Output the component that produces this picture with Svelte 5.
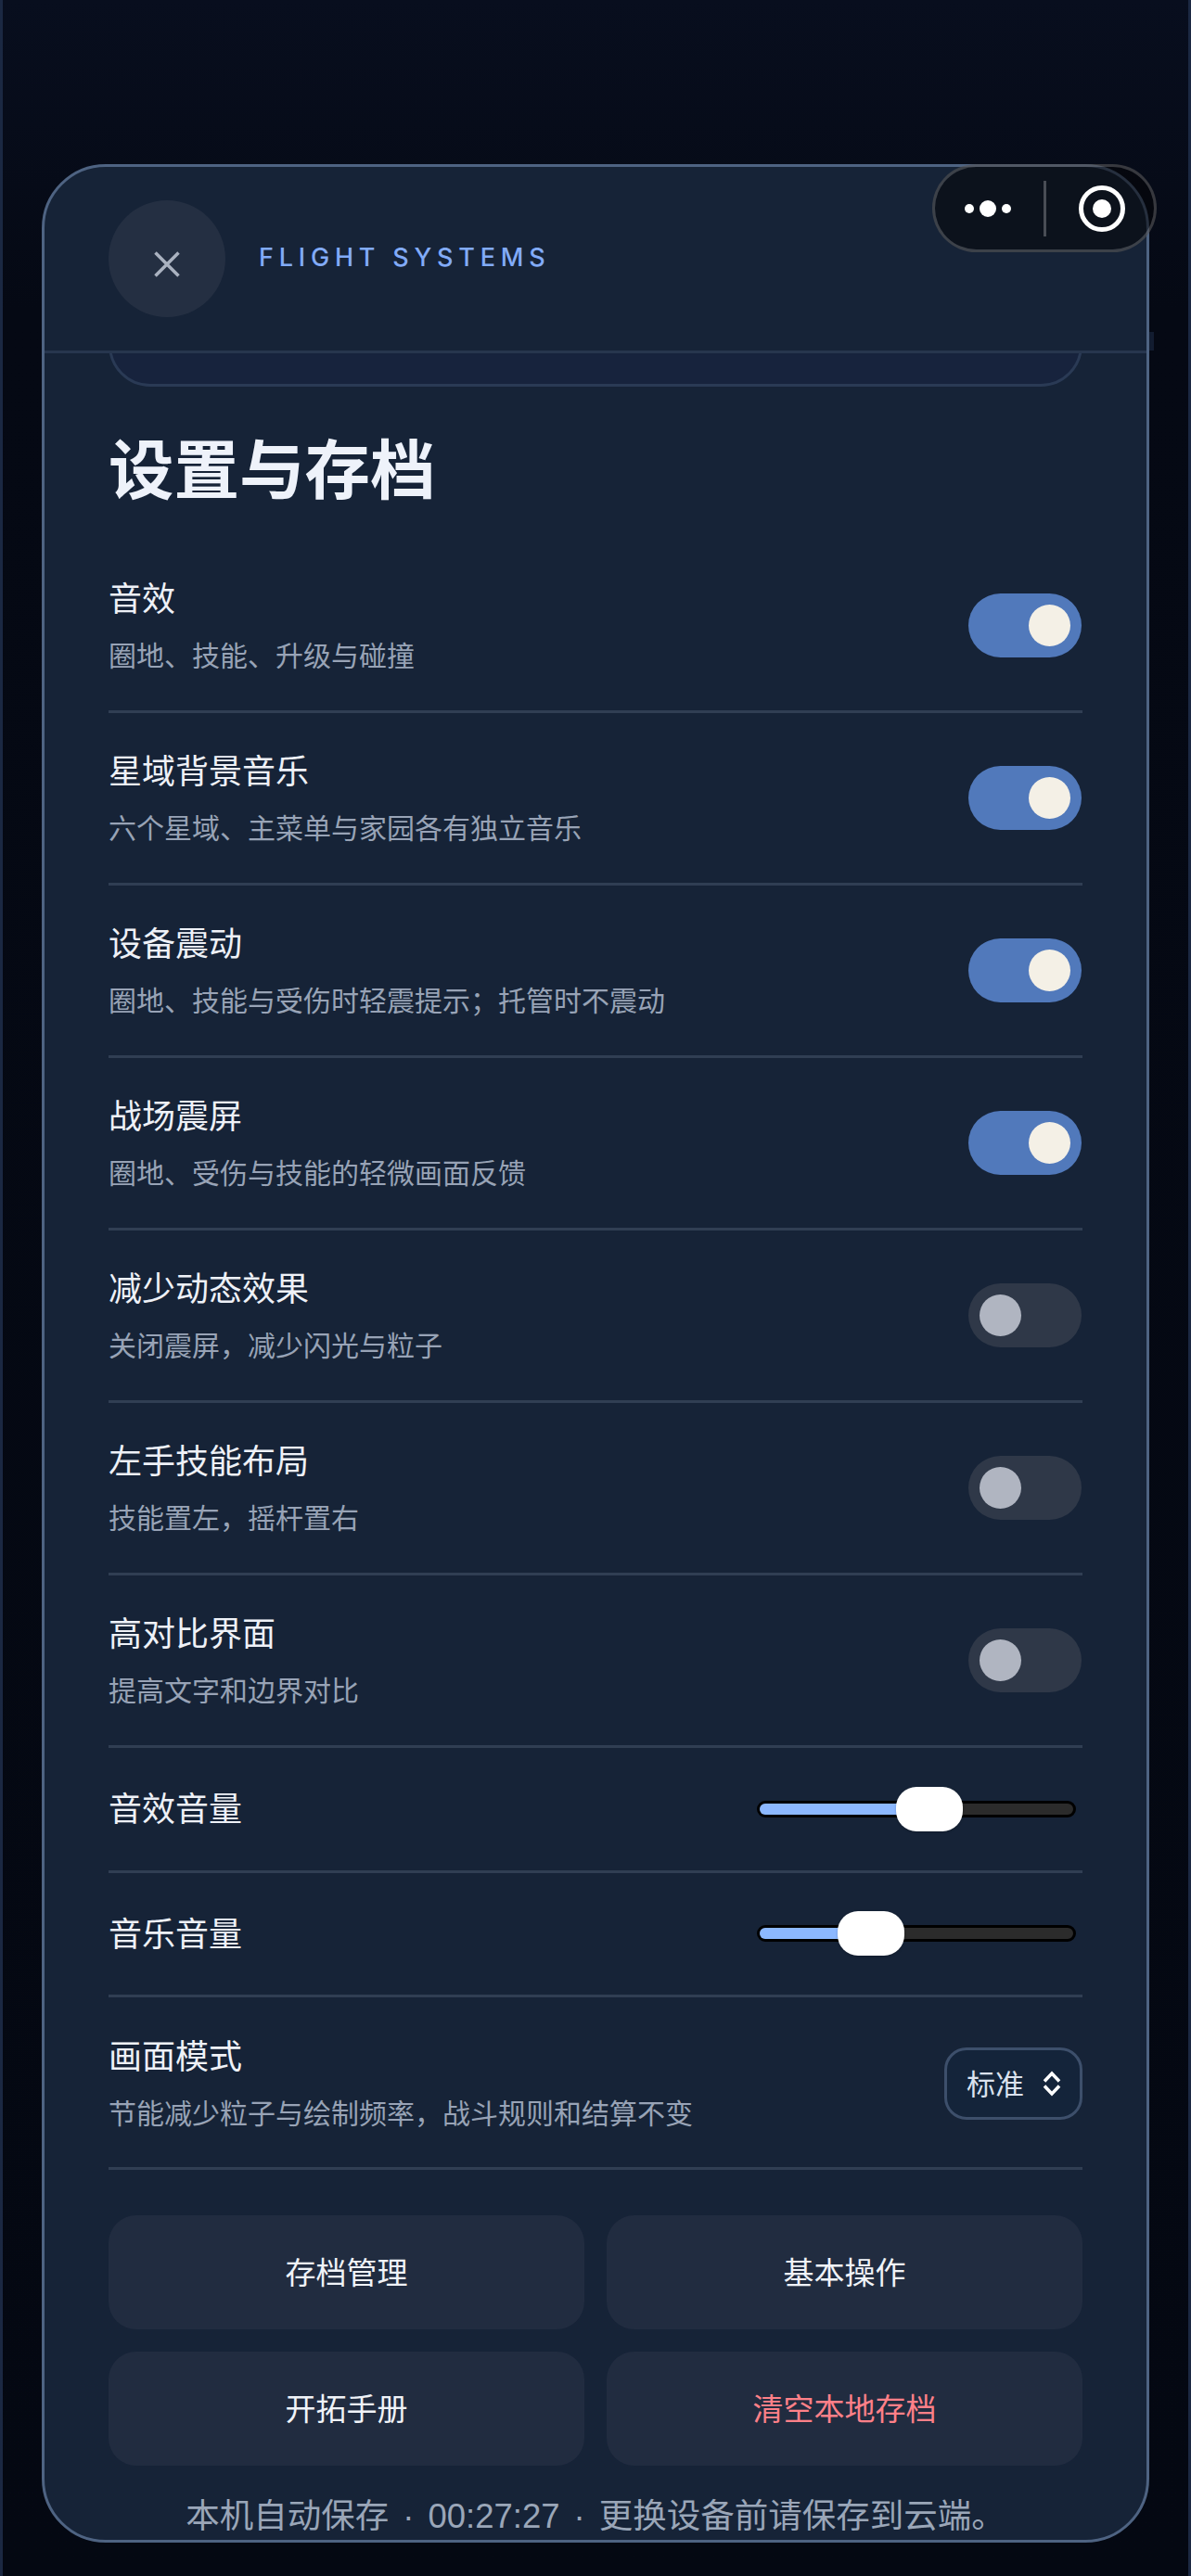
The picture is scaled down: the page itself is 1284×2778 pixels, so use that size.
<script>
  let toggles = $state([
    { label: '音效', sub: '圈地、技能、升级与碰撞', on: true },
    { label: '星域背景音乐', sub: '六个星域、主菜单与家园各有独立音乐', on: true },
    { label: '设备震动', sub: '圈地、技能与受伤时轻震提示；托管时不震动', on: true },
    { label: '战场震屏', sub: '圈地、受伤与技能的轻微画面反馈', on: true },
    { label: '减少动态效果', sub: '关闭震屏，减少闪光与粒子', on: false },
    { label: '左手技能布局', sub: '技能置左，摇杆置右', on: false },
    { label: '高对比界面', sub: '提高文字和边界对比', on: false }
  ]);

  const volumes = [
    { label: '音效音量', value: 55 },
    { label: '音乐音量', value: 32 }
  ];

  const actions = [
    { label: '存档管理' },
    { label: '基本操作' },
    { label: '开拓手册' },
    { label: '清空本地存档', danger: true }
  ];
</script>

<div class="screen">
  <div class="sheet">
    <header class="sheet-header">
      <button class="close" aria-label="关闭">
        <svg width="28" height="28" viewBox="0 0 28 28">
          <path d="M1.5 1.5 26.500 26.500M26.500 1.500 1.500 26.500" />
        </svg>
      </button>
      <span class="eyebrow">FLIGHT SYSTEMS</span>
    </header>

    <div class="sheet-body">
      <div class="peek"></div>
      <h1>设置与存档</h1>

      {#each toggles as item}
        <div class="row">
          <div class="text">
            <div class="label">{item.label}</div>
            <div class="sub">{item.sub}</div>
          </div>
          <button
            class="toggle {item.on ? 'on' : ''}"
            aria-label={item.label}
            onclick={() => (item.on = !item.on)}
          >
            <span class="knob"></span>
          </button>
        </div>
      {/each}

      {#each volumes as vol}
        <div class="row slider-row">
          <div class="label">{vol.label}</div>
          <div class="slider" style="--v: {vol.value}">
            <div class="fill"></div>
            <div class="thumb"></div>
          </div>
        </div>
      {/each}

      <div class="row mode-row">
        <div class="text">
          <div class="label">画面模式</div>
          <div class="sub">节能减少粒子与绘制频率，战斗规则和结算不变</div>
        </div>
        <div class="select">
          <span class="select-value">标准</span>
          <svg width="20" height="28" viewBox="0 0 20 28">
            <path d="M2 11.500 10 3 18 11.500M2 16.500 10 25 18 16.500" />
          </svg>
        </div>
      </div>

      <div class="actions">
        {#each actions as action}
          <button class="action {action.danger ? 'danger' : ''}">{action.label}</button>
        {/each}
      </div>

      <p class="footnote">本机自动保存<span class="sep">·</span>00:27:27<span class="sep">·</span>更换设备前请保存到云端。</p>
    </div>
  </div>

  <div class="edge-mark"></div>

  <div class="capsule">
    <div class="dots">
      <i class="dot"></i>
      <i class="dot big"></i>
      <i class="dot"></i>
    </div>
    <div class="capsule-line"></div>
    <div class="target"><i></i></div>
  </div>
</div>

<style>
  :global(body) {
    margin: 0;
    background: #050914;
  }

  .screen {
    position: relative;
    box-sizing: border-box;
    width: 1284px;
    height: 2778px;
    padding: 177px 42px 0;
    overflow: hidden;
    border-left: 3px solid #1b2842;
    border-right: 3px solid #1b2842;
    background: linear-gradient(180deg, #080e1e 0%, #050914 12%, #040812 100%);
    font-family: "Liberation Sans", "Noto Sans CJK SC", sans-serif;
  }

  button {
    font-family: inherit;
    border: none;
    padding: 0;
    cursor: pointer;
  }

  .sheet {
    box-sizing: border-box;
    height: 2565px;
    display: flex;
    flex-direction: column;
    overflow: hidden;
    background: #162337;
    border: 3px solid #4e6382;
    border-radius: 69px;
  }

  .sheet-header {
    flex: none;
    box-sizing: border-box;
    height: 201px;
    display: flex;
    align-items: center;
    gap: 36px;
    padding: 0 69px;
    border-bottom: 3px solid #27364e;
  }

  .close {
    width: 126px;
    height: 126px;
    padding-top: 12px;
    border-radius: 50%;
    background: #242f42;
    display: flex;
    align-items: center;
    justify-content: center;
  }

  .close path {
    fill: none;
    stroke: #aab2c0;
    stroke-width: 3.500;
  }

  .eyebrow {
    margin-bottom: 3px;
    font-family: Inter, "Liberation Sans", sans-serif;
    font-size: 27px;
    font-weight: 500;
    letter-spacing: 5.800px;
    color: #82abf8;
  }

  .sheet-body {
    flex: 1;
    min-height: 0;
    overflow: hidden;
    padding: 0 69px;
  }

  .peek {
    box-sizing: border-box;
    height: 96px;
    margin-top: -60px;
    background: #17233d;
    border: 3px solid #2a3a55;
    border-radius: 45px;
  }

  h1 {
    margin: 47px 0 29px;
    font-size: 70.500px;
    line-height: 90px;
    font-weight: 700;
    color: #eef2fa;
  }

  .row {
    box-sizing: border-box;
    height: 186px;
    display: flex;
    align-items: center;
    justify-content: space-between;
    border-bottom: 3px solid #303e53;
  }

  .slider-row {
    height: 134.500px;
  }

  .slider-row .label {
    padding-top: 3px;
  }

  .mode-row .text {
    padding-top: 3px;
  }

  .label {
    padding-top: 1px;
    font-size: 36px;
    line-height: 50px;
    color: #eef1f7;
  }

  .sub {
    margin-top: 15px;
    font-size: 30px;
    line-height: 42px;
    color: #98a3b6;
  }

  .toggle {
    position: relative;
    flex: none;
    width: 122px;
    height: 69px;
    margin-right: 1px;
    border-radius: 35px;
    background: #2f3848;
  }

  .toggle.on {
    background: #5179bb;
  }

  .knob {
    position: absolute;
    top: 12px;
    left: 12px;
    width: 45px;
    height: 45px;
    border-radius: 50%;
    background: #b0b5c1;
  }

  .toggle.on .knob {
    left: 65px;
    background: #f4f0e6;
  }

  .slider {
    position: relative;
    box-sizing: border-box;
    width: 344px;
    height: 18px;
    margin-right: 7px;
    background: #2b2b2b;
    border: 3px solid #000;
    border-radius: 9px;
  }

  .fill {
    height: 100%;
    width: calc((100% - 66px) * var(--v) / 100 + 20px);
    background: #8cb8ff;
    border-radius: 6px 0 0 6px;
  }

  .thumb {
    position: absolute;
    top: -18px;
    left: calc((100% + 6px - 72px) * var(--v) / 100 - 3px);
    width: 72px;
    height: 48px;
    border-radius: 22px;
    background: #fff;
    box-shadow: 0 1px 3px rgba(0, 0, 0, 0.2);
  }

  .select {
    flex: none;
    box-sizing: border-box;
    width: 149px;
    height: 78px;
    margin-top: 3px;
    display: flex;
    align-items: center;
    gap: 20px;
    padding-left: 21px;
    background: #14243a;
    border: 3px solid #3d4f6b;
    border-radius: 24px;
    font-size: 31px;
    color: #dbe2ee;
  }

  .select-value {
    padding-bottom: 3px;
  }

  .select path {
    fill: none;
    stroke: #fff;
    stroke-width: 3.500;
  }

  .actions {
    margin-top: 49px;
    display: grid;
    grid-template-columns: 1fr 1fr;
    gap: 24px;
  }

  .action {
    height: 123px;
    padding-bottom: 3px;
    border-radius: 30px;
    background: #212c40;
    font-size: 33px;
    color: #f0f3f8;
  }

  .action.danger {
    color: #ff8088;
  }

  .footnote {
    margin: 30px -40px 0;
    font-size: 36.500px;
    line-height: 50px;
    text-align: center;
    color: #9aa6b8;
  }

  .sep {
    margin: 0 15px;
  }

  /* text from behind the sheet just showing at its right edge */
  .edge-mark {
    position: absolute;
    top: 358px;
    left: 1236px;
    width: 5px;
    height: 20px;
    background: #121c30;
  }

  /* system menu capsule, sits over everything */
  .capsule {
    position: absolute;
    top: 177px;
    left: 1002px;
    box-sizing: border-box;
    width: 242px;
    height: 95px;
    display: flex;
    align-items: center;
    background: rgba(5, 6, 8, 0.55);
    border: 3px solid rgba(255, 255, 255, 0.2);
    border-radius: 48px;
  }

  .dots {
    box-sizing: border-box;
    width: 117px;
    padding-right: 3px;
    display: flex;
    align-items: center;
    justify-content: center;
    gap: 6px;
  }

  .dot {
    width: 10px;
    height: 10px;
    border-radius: 50%;
    background: #fff;
  }

  .dot.big {
    width: 18px;
    height: 18px;
  }

  .capsule-line {
    width: 3px;
    height: 60px;
    background: rgba(255, 255, 255, 0.25);
  }

  .target {
    box-sizing: border-box;
    width: 50px;
    height: 50px;
    margin-left: 35px;
    border: 5px solid #fff;
    border-radius: 50%;
    display: flex;
    align-items: center;
    justify-content: center;
  }

  .target i {
    width: 20px;
    height: 20px;
    border-radius: 50%;
    background: #fff;
  }
</style>
